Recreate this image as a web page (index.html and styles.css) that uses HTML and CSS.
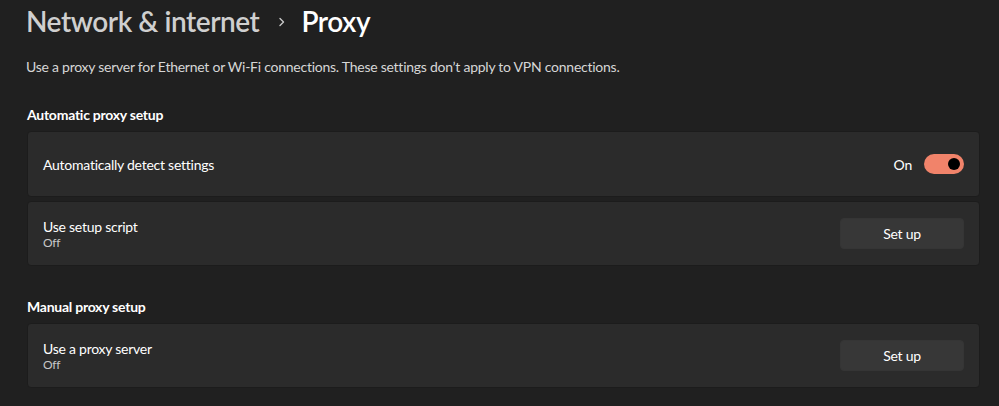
FILE: index.html
```html
<!DOCTYPE html>
<html lang="en">
<head>
<meta charset="utf-8">
<title>Proxy</title>
<link rel="stylesheet" href="styles.css">
</head>
<body>
<main class="page">
  <h1 class="crumbs">
    <span class="crumb-parent">Network &amp; internet</span>
    <svg class="chev" width="10" height="12" viewBox="0 0 10 12" aria-hidden="true"><path d="M3 2.5 L6.5 6 L3 9.5" fill="none" stroke="#c8c8c8" stroke-width="1.4" stroke-linecap="round" stroke-linejoin="round"/></svg>
    <span class="crumb-current">Proxy</span>
  </h1>
  <p class="desc">Use a proxy server for Ethernet or Wi-Fi connections. These settings don’t apply to VPN connections.</p>

  <section class="group">
    <h2 class="group-title">Automatic proxy setup</h2>
    <div class="card card-tall">
      <div class="card-text"><div class="label">Automatically detect settings</div></div>
      <div class="card-ctrl">
        <span class="state">On</span>
        <span class="toggle"><span class="knob"></span></span>
      </div>
    </div>
    <div class="card">
      <div class="card-text"><div class="label">Use setup script</div><div class="sub">Off</div></div>
      <div class="card-ctrl"><button class="btn">Set up</button></div>
    </div>
  </section>

  <section class="group group-2">
    <h2 class="group-title">Manual proxy setup</h2>
    <div class="card">
      <div class="card-text"><div class="label">Use a proxy server</div><div class="sub">Off</div></div>
      <div class="card-ctrl"><button class="btn">Set up</button></div>
    </div>
  </section>
</main>
</body>
</html>
```

FILE: styles.css
```css
html, body {
  margin: 0;
  padding: 0;
  background: #202020;
  height: 100%;
  overflow: hidden;
}
body {
  font-family: "Lato", "Noto Sans", sans-serif;
  color: #ffffff;
  font-size: 14px;
  letter-spacing: -0.25px;
}
.page {
  padding: 0 19px 0 27px;
}
.crumbs {
  margin: 0;
  height: 42px;
  display: flex;
  align-items: center;
  font-size: 28px;
  font-weight: 600;
  line-height: 42px;
  letter-spacing: -0.45px;
}
.crumb-parent { color: #cfcfcf; margin-left: -1px; }
.chev { margin: 2px 14px 0 18px; }
.crumb-current { color: #ffffff; }
.desc {
  margin: 15px 0 0 -1px;
  line-height: 20px;
  color: #d6d6d6;
  font-size: 14px;
}
.group { margin-top: 28px; display: flex; flex-direction: column; gap: 4px; }
.group-2 { margin-top: 31px; }
.group-title {
  margin: 0 0 2px 0;
  font-size: 14px;
  font-weight: 700;
  line-height: 20px;
  color: #ffffff;
}
.card {
  box-sizing: border-box;
  height: 65px;
  background: #2b2b2b;
  border: 1px solid #1c1c1c;
  border-radius: 4px;
  display: flex;
  align-items: center;
  justify-content: space-between;
  padding: 0 15px 0 15px;
}
.card-tall { height: 66px; }
.label { font-size: 14px; line-height: 19px; color: #ffffff; }
.sub { font-size: 12px; line-height: 14px; color: #c8c8c8; }
.card-ctrl { display: flex; align-items: center; }
.state { font-size: 14px; color: #ffffff; margin-right: 12px; }
.toggle {
  box-sizing: border-box;
  width: 40px;
  height: 20px;
  border-radius: 10px;
  background: #f1836a;
  display: flex;
  align-items: center;
  justify-content: flex-end;
  padding-right: 4px;
}
.knob {
  width: 12px;
  height: 12px;
  border-radius: 50%;
  background: #000000;
}
.btn {
  width: 124px;
  height: 31px;
  border: 1px solid #353535;
  border-radius: 4px;
  background: #373737;
  color: #ffffff;
  font-family: inherit;
  font-size: 14px;
  letter-spacing: -0.25px;
  padding: 0;
}
```
